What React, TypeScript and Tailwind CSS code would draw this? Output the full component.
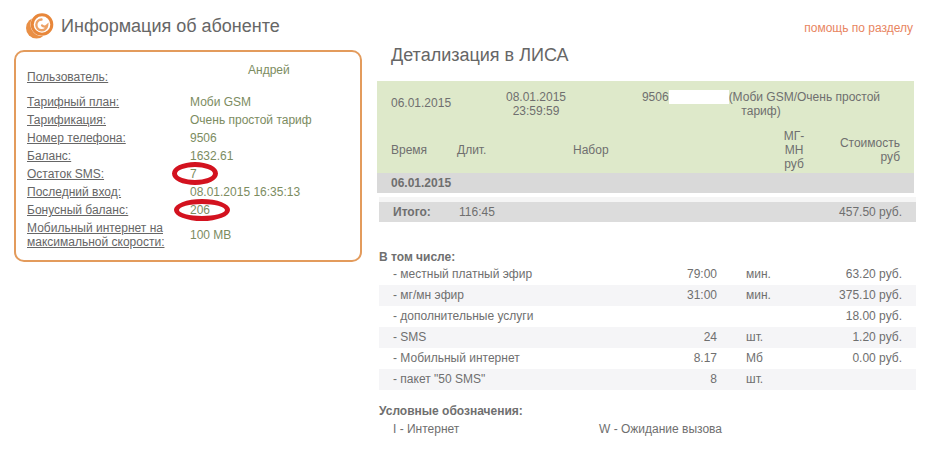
const info = [
  { label: "Тарифный план:", value: "Моби GSM" },
  { label: "Тарификация:", value: "Очень простой тариф" },
  { label: "Номер телефона:", value: "9506" },
  { label: "Баланс:", value: "1632.61" },
  { label: "Остаток SMS:", value: "7", ring: "sms" },
  { label: "Последний вход:", value: "08.01.2015 16:35:13" },
  { label: "Бонусный баланс:", value: "206", ring: "bonus" },
];

const usage = [
  { name: "- местный платный эфир", amount: "79:00", unit: "мин.", cost: "63.20 руб." },
  { name: "- мг/мн эфир", amount: "31:00", unit: "мин.", cost: "375.10 руб." },
  { name: "- дополнительные услуги", amount: "", unit: "", cost: "18.00 руб." },
  { name: "- SMS", amount: "24", unit: "шт.", cost: "1.20 руб." },
  { name: "- Мобильный интернет", amount: "8.17", unit: "Мб", cost: "0.00 руб." },
  { name: '- пакет "50 SMS"', amount: "8", unit: "шт.", cost: "" },
];

function Logo() {
  return (
    <svg width="28" height="26" viewBox="0 0 28 26" className="shrink-0">
      <circle cx="10.5" cy="15" r="10.5" fill="#e98f45" />
      <circle cx="16" cy="11.5" r="11.5" fill="#fff" />
      <circle cx="16" cy="11.5" r="9.8" fill="none" stroke="#e8873a" strokeWidth="3" />
      <path d="M15.5 6.5a5.4 5.4 0 1 0 5.6 6c-1.5 1.3-3.8 1.3-5 0" fill="none" stroke="#eda266" strokeWidth="2.4" strokeLinecap="round" />
    </svg>
  );
}

export default function App() {
  return (
    <div className="flex w-[950px] h-[466px] overflow-hidden bg-white text-[12px] leading-[14px] text-[#6f6f6f] font-['Liberation_Sans',Arial,sans-serif]">
      {/* left column */}
      <div className="w-[377px] shrink-0 pl-[14px]">
        <div className="flex items-center h-[26px] mt-[13px] pl-[12px] gap-[7px]">
          <Logo />
          <h1 className="text-[18px] leading-[26px] text-[#666]">Информация об абоненте</h1>
        </div>
        <div className="w-[348px] h-[212px] mt-[11px] border-2 border-[#e39b5c] rounded-[10px] pl-[11px]">
          <div className="grid grid-cols-[163px_1fr] h-[41px]">
            <span className="pt-[16px] leading-[18px] underline text-[#666]">Пользователь:</span>
            <span className="pt-[9px] pl-[58px] leading-[18px] text-[#7c8c5f]">Андрей</span>
          </div>
          {info.map((row) => (
            <div key={row.label} className="grid grid-cols-[163px_1fr] h-[18px] leading-[18px]">
              <span className="underline text-[#666]">{row.label}</span>
              <span className="relative text-[#7c8c5f]">
                {row.value}
                {row.ring === "sms" && (
                  <span className="absolute left-[-18px] top-[-3px] w-[46px] h-[23px] rounded-[50%] border-[5px] border-[#d3121f]" />
                )}
                {row.ring === "bonus" && (
                  <span className="absolute left-[-16px] top-[-2px] w-[56px] h-[22px] rounded-[50%] border-[5px] border-[#d3121f]" />
                )}
              </span>
            </div>
          ))}
          <div className="grid grid-cols-[163px_1fr] items-center mt-[2px]">
            <span className="underline text-[#666]">
              Мобильный интернет на
              <br />
              максимальной скорости:
            </span>
            <span className="text-[#7c8c5f]">100 MB</span>
          </div>
        </div>
      </div>

      {/* right column */}
      <div className="w-[539px] shrink-0">
        <div className="h-[21px] mt-[21px] w-[536px] text-right leading-[14px] text-[#e8855f]">помощь по разделу</div>
        <h2 className="h-[26px] pl-[14px] text-[18px] leading-[26px] text-[#666]">Детализация в ЛИСА</h2>

        <div className="w-[537px] h-[92px] mt-[13px] bg-[#dee9ca]">
          <div className="flex h-[47px] pl-[14px]">
            <div className="w-[99px] pt-[15px]">06.01.2015</div>
            <div className="w-[92px] pt-[9px] text-center">
              08.01.2015
              <br />
              23:59:59
            </div>
            <div className="w-[244px] ml-[57px] pt-[9px] text-center">
              9506
              <span className="inline-block w-[60px] h-[14px] align-top bg-white" />
              (Моби GSM/Очень простой тариф)
            </div>
          </div>
          <div className="grid grid-cols-[66px_116px_207px_28px_1fr] pl-[14px] pr-[14px] pb-[2px] items-center h-[45px]">
            <span>Время</span>
            <span>Длит.</span>
            <span>Набор</span>
            <span className="text-center">МГ-МН руб</span>
            <span className="text-right">
              Стоимость
              <br />
              руб
            </span>
          </div>
        </div>

        <div className="w-[537px] h-[20px] pl-[14px] bg-[#d9d9d9] font-bold leading-[20px]">06.01.2015</div>

        <div className="w-[537px] h-[5px] mt-[4px] ml-[2px] bg-[#f5f5f5]" />
        <div className="flex justify-between w-[537px] h-[20px] ml-[2px] px-[14px] bg-[#dcdcdc] leading-[20px]">
          <div className="flex">
            <span className="w-[66px] font-bold">Итого:</span>
            <span>116:45</span>
          </div>
          <span>457.50 руб.</span>
        </div>

        <div className="ml-[2px] mt-[28px] font-bold h-[14px]">В том числе:</div>
        <div className="w-[537px] ml-[2px]">
          {usage.map((row, i) => (
            <div
              key={row.name}
              className={`grid grid-cols-[14px_230px_94px_29px_1fr_14px] h-[21px] leading-[20px] ${i % 2 === 1 ? "bg-[#f5f5f7]" : ""}`}
            >
              <span />
              <span>{row.name}</span>
              <span className="text-right">{row.amount}</span>
              <span className="col-start-5 flex justify-between">
                <span>{row.unit}</span>
                <span>{row.cost}</span>
              </span>
            </div>
          ))}
        </div>

        <div className="ml-[2px] mt-[14px] font-bold h-[14px]">Условные обозначения:</div>
        <div className="flex ml-[16px] mt-[4px]">
          <span className="w-[206px]">I - Интернет</span>
          <span>W - Ожидание вызова</span>
        </div>
      </div>
    </div>
  );
}
